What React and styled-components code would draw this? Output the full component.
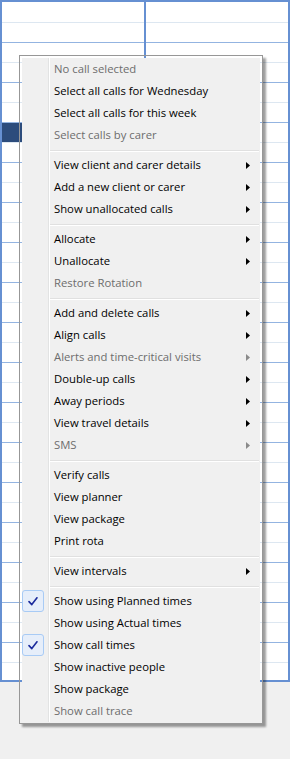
import React from 'react'
import styled, { createGlobalStyle } from 'styled-components'

const GlobalStyle = createGlobalStyle`
    html, body {
        margin: 0;
        padding: 0;
        background: #f0f0f0;
        font-family: "Open Sans", "Liberation Sans", sans-serif;
    }
`

const Page = styled.div`
    position: relative;
    width: 290px;
    height: 759px;
    overflow: hidden;
    background: #f0f0f0;
`

const Board = styled.div`
    display: flex;
    height: 682px;
    box-sizing: border-box;
    border: 2px solid #6690d2;
    background: #fff;
    overflow: hidden;
`

const Column = styled.div`
    flex: 1;
    display: flex;
    flex-direction: column;
    & + & {
        border-left: 2px solid #6690d2;
    }
`

const GridRow = styled.div`
    flex: none;
    display: flex;
    box-sizing: border-box;
    height: ${p => (p.first ? 21 : 20)}px;
    border-bottom: 1px solid ${p => (p.strong ? '#93b4e1' : '#dde7f1')};
`

const Call = styled.div`
    width: 80px;
    background: #2c4c7c;
`

const Menu = styled.div`
    position: absolute;
    left: 19px;
    top: 55px;
    width: 244px;
    box-sizing: border-box;
    padding: 2px 2px 1px 2px;
    border: 1px solid #979797;
    background-color: #f0f0f0;
    background-image: linear-gradient(to right, transparent 26px, #e2e3e3 26px, #e2e3e3 27px, #ffffff 27px, #ffffff 28px, transparent 28px);
    background-origin: content-box;
    background-clip: content-box;
    background-repeat: no-repeat;
    box-shadow: 3px 3px 2px rgba(0, 0, 0, 0.38);
    font-size: 11.3px;
`

const Item = styled.div`
    display: flex;
    align-items: center;
    height: 22px;
    color: ${p => (p.disabled ? '#6d6d6d' : '#000')};
    white-space: nowrap;
`

const CheckSlot = styled.div`
    flex: none;
    width: 22px;
    height: 22px;
    box-sizing: border-box;
    margin-right: 10px;
    display: flex;
    align-items: center;
    justify-content: center;
    border: 1px solid ${p => (p.on ? '#a8cbf5' : 'transparent')};
    border-radius: 3px;
    background: ${p => (p.on ? '#e6eefa' : 'transparent')};
`

const Label = styled.span`
    flex: 1;
    height: 22px;
    line-height: 21px;
`

const ArrowSlot = styled.span`
    flex: none;
    width: 4px;
    margin-right: 10px;
    display: flex;
    align-items: center;
`

const Separator = styled.div`
    height: 8px;
    margin: 0 1px 0 28px;
    box-sizing: border-box;
    padding-top: 4px;
    &::after {
        content: '';
        display: block;
        height: 0;
        border-top: 1px solid #e0e0e0;
        border-bottom: 1px solid #ffffff;
    }
`

const SEP = '-'

const items = [
    { label: 'No call selected', disabled: true },
    { label: 'Select all calls for Wednesday' },
    { label: 'Select all calls for this week' },
    { label: 'Select calls by carer', disabled: true },
    SEP,
    { label: 'View client and carer details', sub: true },
    { label: 'Add a new client or carer', sub: true },
    { label: 'Show unallocated calls', sub: true },
    SEP,
    { label: 'Allocate', sub: true },
    { label: 'Unallocate', sub: true },
    { label: 'Restore Rotation', disabled: true },
    SEP,
    { label: 'Add and delete calls', sub: true },
    { label: 'Align calls', sub: true },
    { label: 'Alerts and time-critical visits', sub: true, disabled: true },
    { label: 'Double-up calls', sub: true },
    { label: 'Away periods', sub: true },
    { label: 'View travel details', sub: true },
    { label: 'SMS', sub: true, disabled: true },
    SEP,
    { label: 'Verify calls' },
    { label: 'View planner' },
    { label: 'View package' },
    { label: 'Print rota' },
    SEP,
    { label: 'View intervals', sub: true },
    SEP,
    { label: 'Show using Planned times', checked: true },
    { label: 'Show using Actual times' },
    { label: 'Show call times', checked: true },
    { label: 'Show inactive people' },
    { label: 'Show package' },
    { label: 'Show call trace', disabled: true },
]

const Tick = () => (
    <svg width="10" height="9" viewBox="0 0 10 9">
        <path d="M1 4.6 L3.8 7.6 L9 0.8" fill="none" stroke="#1a2a9c" strokeWidth="1.6" strokeLinecap="round" strokeLinejoin="round" />
    </svg>
)

const Arrow = ({ disabled }) => (
    <svg width="4" height="7" viewBox="0 0 4 7">
        <polygon points="0,0 4,3.5 0,7" fill={disabled ? '#8a8a8a' : '#000'} />
    </svg>
)

const GRID_ROWS = 35

function GridColumn({ withCall }) {
    const rows = []
    for (let i = 0; i < GRID_ROWS; i++) {
        rows.push(
            <GridRow key={i} first={i === 0} strong={i % 2 === 1}>
                {withCall && i === 6 ? <Call /> : null}
            </GridRow>
        )
    }
    return <Column>{rows}</Column>
}

export default function App() {
    return (
        <Page>
            <GlobalStyle />
            <Board>
                <GridColumn withCall />
                <GridColumn />
            </Board>
            <Menu>
                {items.map((it, i) =>
                    it === SEP ? (
                        <Separator key={i} />
                    ) : (
                        <Item key={i} disabled={it.disabled}>
                            <CheckSlot on={it.checked}>{it.checked ? <Tick /> : null}</CheckSlot>
                            <Label>{it.label}</Label>
                            <ArrowSlot>{it.sub ? <Arrow disabled={it.disabled} /> : null}</ArrowSlot>
                        </Item>
                    )
                )}
            </Menu>
        </Page>
    )
}
